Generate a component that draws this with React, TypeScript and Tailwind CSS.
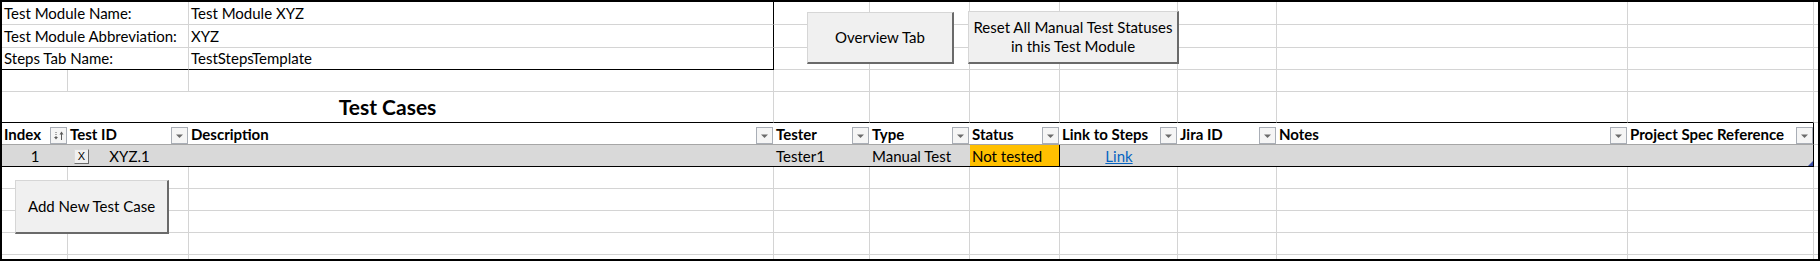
import React from "react";

const W = [
  "w-[66px]",
  "w-[121px]",
  "w-[585px]",
  "w-[96px]",
  "w-[100px]",
  "w-[90px]",
  "w-[118px]",
  "w-[99px]",
  "w-[351px]",
  "w-[186px]",
];

function Cells({ from, bottom }: { from: number; bottom?: string }) {
  return (
    <>
      {W.slice(from).map((w, i) => (
        <div
          key={i}
          className={`${w} shrink-0 h-full border-r border-r-[#d4d4d4] border-b ${bottom ?? "border-b-[#d4d4d4]"}`}
        />
      ))}
    </>
  );
}

function Filler() {
  return <div className="flex-1 h-full border-b border-b-[#d4d4d4]" />;
}

function GridRow({ h }: { h: string }) {
  return (
    <div className={`flex ${h}`}>
      <Cells from={0} />
      <Filler />
    </div>
  );
}

function FilterBtn({ sort }: { sort?: boolean }) {
  return (
    <div className="w-[17px] h-[17px] shrink-0 border border-[#a9aeb6] bg-[#f5f5f5] flex items-center justify-center">
      {sort ? (
        <svg width="15" height="15" viewBox="0 0 15 15">
          <line x1="5" y1="4" x2="5" y2="9" stroke="#5a5a5a" strokeWidth="1" strokeDasharray="1 1" />
          <polygon points="3,9 7,9 5,11.5" fill="#5a5a5a" />
          <line x1="10.5" y1="6" x2="10.5" y2="12" stroke="#5a5a5a" strokeWidth="1" />
          <polygon points="8.5,6.5 12.5,6.5 10.5,3.5" fill="#5a5a5a" />
        </svg>
      ) : (
        <svg width="15" height="15" viewBox="0 0 15 15">
          <polygon points="4,6.5 11,6.5 7.5,10" fill="#6b6b6b" />
        </svg>
      )}
    </div>
  );
}

function Hd({ w, label, sort, last }: { w: string; label: string; sort?: boolean; last?: boolean }) {
  return (
    <div
      className={`${w} shrink-0 h-full border-b border-b-[#a6a6a6] flex items-end justify-between pl-[2px] ${
        last ? "border-r border-r-black pr-0" : "pr-[1px]"
      }`}
    >
      <span className="font-bold leading-[18px] pb-[1px] whitespace-nowrap">{label}</span>
      <FilterBtn sort={sort} />
    </div>
  );
}

const txt = "leading-[18px] pb-[2px] whitespace-nowrap";
const dtxt = "leading-[18px] pb-[1px] whitespace-nowrap";

function XlButton({ className, children }: { className: string; children: React.ReactNode }) {
  return (
    <div
      className={`absolute bg-[#f0f0f0] border-t border-l border-t-[#d6d6d6] border-l-[#d6d6d6] border-r-2 border-b-2 border-r-[#6a6a6a] border-b-[#6a6a6a] flex items-center justify-center text-center text-[15px] leading-[19px] text-black whitespace-nowrap ${className}`}
    >
      {children}
    </div>
  );
}

export default function App() {
  return (
    <div className="w-[1820px] h-[261px] bg-white border-2 border-black relative overflow-hidden font-['Lato','Noto_Sans',sans-serif] text-[15px] text-black">
      {/* Row 1 */}
      <div className="flex h-[23px]">
        <div className={`w-[187px] shrink-0 h-full border-r border-b border-[#d4d4d4] flex items-end pl-[2px] ${txt}`}>
          Test Module Name:
        </div>
        <div className={`w-[585px] shrink-0 h-full border-r border-r-black border-b border-b-[#d4d4d4] flex items-end pl-[2px] ${txt}`}>
          Test Module XYZ
        </div>
        <Cells from={3} />
        <Filler />
      </div>
      {/* Row 2 */}
      <div className="flex h-[23px]">
        <div className={`w-[187px] shrink-0 h-full border-r border-b border-[#d4d4d4] flex items-end pl-[2px] ${txt}`}>
          Test Module Abbreviation:
        </div>
        <div className={`w-[585px] shrink-0 h-full border-r border-r-black border-b border-b-[#d4d4d4] flex items-end pl-[2px] ${txt}`}>
          XYZ
        </div>
        <Cells from={3} />
        <Filler />
      </div>
      {/* Row 3 */}
      <div className="flex h-[22px]">
        <div className={`w-[187px] shrink-0 h-full border-r border-r-[#d4d4d4] border-b border-b-black flex items-end pl-[2px] ${txt}`}>
          Steps Tab Name:
        </div>
        <div className={`w-[585px] shrink-0 h-full border-r border-r-black border-b border-b-black flex items-end pl-[2px] ${txt}`}>
          TestStepsTemplate
        </div>
        <Cells from={3} />
        <Filler />
      </div>
      {/* Row 4 */}
      <GridRow h="h-[22px]" />
      {/* Row 5: title */}
      <div className="flex h-[31px]">
        <div className="w-[772px] shrink-0 h-full border-r border-r-[#d4d4d4] border-b border-b-black flex items-end justify-center">
          <span className="text-[21px] font-bold leading-[25px] pb-[3px]">Test Cases</span>
        </div>
        <Cells from={3} bottom="border-b-black" />
        <Filler />
      </div>
      {/* Row 6: header */}
      <div className="flex h-[22px]">
        <Hd w="w-[66px]" label="Index" sort />
        <Hd w="w-[121px]" label="Test ID" />
        <Hd w="w-[585px]" label="Description" />
        <Hd w="w-[96px]" label="Tester" />
        <Hd w="w-[100px]" label="Type" />
        <Hd w="w-[90px]" label="Status" />
        <Hd w="w-[118px]" label="Link to Steps" />
        <Hd w="w-[99px]" label="Jira ID" />
        <Hd w="w-[351px]" label="Notes" />
        <Hd w="w-[186px]" label="Project Spec Reference" last />
        <Filler />
      </div>
      {/* Row 7: data */}
      <div className="flex h-[22px]">
        <div className="flex w-[1812px] shrink-0 h-full bg-[#d9d9d9] border-r border-r-black border-b border-b-black relative">
          <div className={`w-[66px] shrink-0 flex items-end justify-center ${dtxt}`}>1</div>
          <div className={`w-[121px] shrink-0 flex items-end justify-center relative ${dtxt}`}>
            <span className="pl-[2px]">XYZ.1</span>
            <div className="absolute left-[6px] top-[4px] w-[15px] h-[15px] bg-[#f0f0f0] border-t border-l border-t-[#dcdcdc] border-l-[#dcdcdc] border-r border-b border-r-[#6a6a6a] border-b-[#6a6a6a] flex items-center justify-center text-[11px] leading-[11px] font-['Liberation_Sans',sans-serif]">
              X
            </div>
          </div>
          <div className="w-[585px] shrink-0" />
          <div className={`w-[96px] shrink-0 flex items-end pl-[2px] ${dtxt}`}>Tester1</div>
          <div className={`w-[100px] shrink-0 flex items-end pl-[2px] ${dtxt}`}>Manual Test</div>
          <div className={`w-[90px] shrink-0 flex items-end pl-[2px] bg-[#ffc000] border-r border-r-black ${dtxt}`}>Not tested</div>
          <div className={`w-[118px] shrink-0 flex items-end justify-center ${dtxt}`}>
            <span className="text-[#0563c1] underline">Link</span>
          </div>
          <div className="w-[99px] shrink-0" />
          <div className="w-[351px] shrink-0" />
          <div className="flex-1" />
          <svg className="absolute right-[0px] bottom-[0px]" width="5" height="5" viewBox="0 0 5 5">
            <polygon points="5,0 5,5 0,5" fill="#3b4ea6" />
          </svg>
        </div>
        <Filler />
      </div>
      {/* Rows 8-12 */}
      <GridRow h="h-[22px]" />
      <GridRow h="h-[22px]" />
      <GridRow h="h-[22px]" />
      <GridRow h="h-[22px]" />
      <div className="flex h-[4px]">
        {W.map((w, i) => (
          <div key={i} className={`${w} shrink-0 h-full border-r border-r-[#d4d4d4]`} />
        ))}
        <div className="flex-1" />
      </div>

      {/* selection hint on top edge */}
      <div className="absolute top-[-2px] left-[1274px] w-[351px] h-[2px] bg-[#217346]" />

      {/* Floating buttons */}
      <XlButton className="left-[805px] top-[10px] w-[147px] h-[52px]">Overview Tab</XlButton>
      <XlButton className="left-[966px] top-[9px] w-[211px] h-[53px]">
        <span>
          Reset All Manual Test Statuses
          <br />
          in this Test Module
        </span>
      </XlButton>
      <XlButton className="left-[13px] top-[178px] w-[154px] h-[54px]">Add New Test Case</XlButton>
    </div>
  );
}
